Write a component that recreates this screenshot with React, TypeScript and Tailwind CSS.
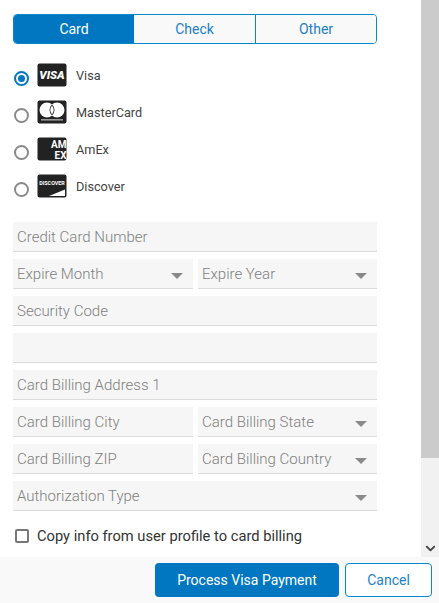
import { ChevronDown } from 'lucide-react';

const font = { fontFamily: 'Roboto, "Liberation Sans", sans-serif' };

function VisaIcon() {
  return (
    <svg width="30" height="24" viewBox="0 0 30 24">
      <rect x="0.5" y="0.5" width="29" height="23" rx="2" fill="#222" />
      <text x="15" y="16" textAnchor="middle" fill="#fff" fontSize="11.5" fontWeight="900" fontStyle="italic" fontFamily="Roboto, sans-serif">VISA</text>
    </svg>
  );
}

function MasterCardIcon() {
  return (
    <svg width="30" height="24" viewBox="0 0 30 24">
      <rect x="0.5" y="0.5" width="29" height="23" rx="2" fill="#222" />
      <circle cx="10" cy="10" r="7.5" fill="#fff" />
      <circle cx="20" cy="10" r="7.5" fill="#fff" />
      <path d="M15 4.4a7.5 7.5 0 0 1 0 11.2a7.5 7.5 0 0 1 0-11.2z" fill="#222" />
      <path d="M15 5.8a6 6 0 0 1 0 8.4a6 6 0 0 1 0-8.4z" fill="#fff" />
      <rect x="4" y="19" width="22" height="1.6" fill="#999" />
    </svg>
  );
}

function AmexIcon() {
  return (
    <svg width="30" height="24" viewBox="0 0 30 24">
      <rect x="0.5" y="0.5" width="29" height="23" rx="2" fill="#222" />
      <text x="29.5" y="11" textAnchor="end" fill="#fff" fontSize="10" fontWeight="700" fontFamily="Roboto, sans-serif">AM</text>
      <text x="29.5" y="21.5" textAnchor="end" fill="#fff" fontSize="10" fontWeight="700" fontFamily="Roboto, sans-serif">EX</text>
    </svg>
  );
}

function DiscoverIcon() {
  return (
    <svg width="30" height="24" viewBox="0 0 30 24">
      <rect x="0.5" y="0.5" width="29" height="23" rx="2" fill="#222" />
      <text x="15" y="11" textAnchor="middle" fill="#fff" fontSize="5.4" fontWeight="700" fontFamily="Roboto, sans-serif">DISCOVER</text>
      <path d="M12 22 L28 15.5 V22 Z" fill="#fff" />
    </svg>
  );
}

function Radio({ checked }: { checked?: boolean }) {
  return (
    <span
      className={`flex h-[15px] w-[15px] shrink-0 items-center justify-center rounded-full border-2 bg-white ${
        checked ? 'border-[#0077c0]' : 'border-[#8a8a8a]'
      }`}
    >
      {checked && <span className="h-[7px] w-[7px] rounded-full bg-[#0077c0]" />}
    </span>
  );
}

function CardOption({ label, icon, checked }: { label: string; icon: React.ReactNode; checked?: boolean }) {
  return (
    <div className="flex h-[24px] items-start">
      <div className="ml-px mt-[8px] w-[23px]">
        <Radio checked={checked} />
      </div>
      {icon}
      <span className="ml-[9px] mt-[4px] text-[12.7px] leading-[18px] text-[#444]">{label}</span>
    </div>
  );
}

function Field({ label, select, className }: { label?: string; select?: boolean; className?: string }) {
  return (
    <div
      className={`flex h-[30px] items-center justify-between border-b border-[#dcdcdc] bg-[#f6f6f6] pl-1 pr-[10px] ${className ?? ''}`}
    >
      <span className="pt-[2px] text-[15px] font-light text-[#808080]">{label}</span>
      {select && (
        <svg width="12" height="6" viewBox="0 0 12 6" className="mt-[5px]">
          <path d="M0 0h12L6 6z" fill="#8a8a8a" />
        </svg>
      )}
    </div>
  );
}

export default function App() {
  return (
    <div className="flex h-[603px] w-[439px] flex-col overflow-hidden bg-white" style={font}>
      <div className="flex min-h-0 flex-1">
        <div className="w-[421px] pl-[13px] pr-[44px] pt-[14px]">
          <div className="flex h-[30px] w-[364px] overflow-hidden rounded-[4px] border border-[#0a87c9] text-[14px]">
            <button className="w-[120px] bg-[#0077c0] text-white">Card</button>
            <button className="w-[121px] bg-[#f9f9f9] text-[#1e7fc2]">Check</button>
            <button className="flex-1 border-l border-[#0a87c9] bg-[#f9f9f9] text-[#1e7fc2]">Other</button>
          </div>

          <div className="mt-[19px] flex flex-col gap-[13px]">
            <CardOption label="Visa" icon={<VisaIcon />} checked />
            <CardOption label="MasterCard" icon={<MasterCardIcon />} />
            <CardOption label="AmEx" icon={<AmexIcon />} />
            <CardOption label="Discover" icon={<DiscoverIcon />} />
          </div>

          <div className="mt-[24px] grid w-[364px] grid-cols-[180px_179px] gap-x-[5px] gap-y-[7px]">
            <Field label="Credit Card Number" className="col-span-2" />
            <Field label="Expire Month" select />
            <Field label="Expire Year" select />
            <Field label="Security Code" className="col-span-2" />
            <Field className="col-span-2" />
            <Field label="Card Billing Address 1" className="col-span-2" />
            <Field label="Card Billing City" />
            <Field label="Card Billing State" select />
            <Field label="Card Billing ZIP" />
            <Field label="Card Billing Country" select />
            <Field label="Authorization Type" select className="col-span-2" />
          </div>

          <label className="ml-[2px] mt-[14px] flex items-center gap-[8px] text-[14.7px] text-[#333]">
            <span className="h-[14px] w-[14px] shrink-0 rounded-[2px] border-2 border-[#777] bg-white" />
            Copy info from user profile to card billing
          </label>
        </div>

        <div className="flex w-[18px] flex-col bg-[#f1f1f1]">
          <div className="h-[458px] bg-[#cbcbcb]" />
          <div className="mt-auto flex h-[17px] items-center justify-center text-[#444]">
            <ChevronDown size={15} strokeWidth={3} />
          </div>
        </div>
      </div>

      <div className="flex h-[46px] shrink-0 items-start justify-end gap-[6px] bg-[#f9f9f9] pr-[7px] pt-[6px] text-[14px]">
        <button className="h-[34px] w-[184px] rounded-[4px] bg-[#0077c0] text-white">Process Visa Payment</button>
        <button className="h-[34px] w-[87px] rounded-[4px] border border-[#0a87c9] bg-white text-[#1e7fc2]">Cancel</button>
      </div>
    </div>
  );
}
